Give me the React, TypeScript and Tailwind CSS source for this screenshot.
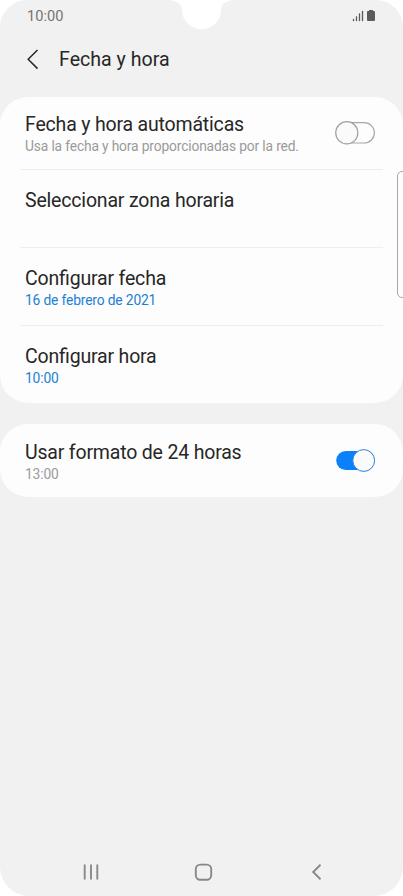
import type { ReactNode } from 'react';

function Toggle({ on = false }: { on?: boolean }) {
  return (
    <svg width="42" height="26" viewBox="0 0 42 26" role="switch" aria-checked={on} className="shrink-0">
      {on ? (
        <>
          <rect x="2.2" y="2.9" width="38" height="19.2" rx="9.6" fill="#0a80fb" />
          <circle cx="29.7" cy="12.5" r="10.9" fill="#fafafa" stroke="#2482d8" strokeWidth="1" />
        </>
      ) : (
        <>
          <rect x="3.2" y="2.6" width="37.2" height="20.4" rx="10.2" fill="#fdfdfd" stroke="#a8a8a8" strokeWidth="1.2" />
          <circle cx="12.8" cy="12.8" r="11.1" fill="#fafafa" stroke="#a0a0a0" strokeWidth="1.2" />
        </>
      )}
    </svg>
  );
}

type RowProps = { title: string; sub?: string; subClass?: string; className: string; control?: ReactNode };

function Row({ title, sub, subClass = '', className, control }: RowProps) {
  return (
    <div className={`flex justify-between pl-[5px] pr-[7px] ${className}`}>
      <div className="whitespace-nowrap">
        <div className="text-[19.500px] leading-[23px] tracking-[-0.180px] text-[#272727] [font-feature-settings:'liga']">{title}</div>
        {sub && <div className={`text-[13.800px] leading-5 tracking-[-0.150px] ${subClass}`}>{sub}</div>}
      </div>
      {control}
    </div>
  );
}

export default function App() {
  return (
    <div className="h-[896px] w-[403px] overflow-hidden bg-white font-[Roboto,sans-serif]">
      <div className="relative flex h-full flex-col overflow-hidden rounded-t-[27px] rounded-b-[29px] bg-[#f1f1f1]">
        <svg className="absolute left-[170px] top-0" width="64" height="30" viewBox="0 0 64 30">
          <path d="M0 0C7 1 11.800 4 11.800 9.500A19.700 19.700 0 0 0 51.200 9.500C51.200 4 56 1 63 0Z" fill="#fff" />
        </svg>

        <header className="flex h-8 items-center justify-between pl-[27px] pr-[27px]">
          <span className="text-[14.600px] leading-4 text-[#737373]">10:00</span>
          <svg width="25" height="14" viewBox="0 0 25 14" fill="#5c5c5c">
            <path d="M2 10h1v2H2zM5 7.500h1V12H5zM8 4.500h1V12H8zM11 2h1v10h-1z" stroke="#5c5c5c" strokeWidth=".3" />
            <path d="M18 1h4v1h1q1 0 1 1v8q0 1-1 1h-6q-1 0-1-1V3q0-1 1-1h1z" />
          </svg>
        </header>

        <div className="flex h-[65px] items-center pb-[10px] pl-[26px]">
          <svg width="14" height="22" viewBox="0 0 14 22" fill="none" stroke="#272727" strokeWidth="1.500">
            <path d="M11.500 1 2.200 10.300l9.300 9.300" />
          </svg>
          <h1 className="ml-[19px] pt-px text-[19.600px] leading-6 text-[#272727]">Fecha y hora</h1>
        </div>

        <section className="h-[306px] rounded-[28px] bg-[#fdfdfd] px-5">
          <Row
            title="Fecha y hora automáticas"
            sub="Usa la fecha y hora proporcionadas por la red."
            subClass="text-[#9a9a9a]"
            className="h-[73px] border-b border-[#eeeeee] pt-4"
            control={<div className="pt-[7px]"><Toggle /></div>}
          />
          <Row title="Seleccionar zona horaria" className="h-[78px] border-b border-[#eeeeee] pt-[19px]" />
          <Row
            title="Configurar fecha"
            sub="16 de febrero de 2021"
            subClass="text-[#1b80d4]"
            className="h-[78px] border-b border-[#eeeeee] pt-[19px]"
          />
          <Row title="Configurar hora" sub="10:00" subClass="text-[#1b80d4]" className="h-[77px] pt-[19px]" />
        </section>

        <section className="mt-[21px] h-[73px] rounded-[28px] bg-[#fdfdfd] px-5">
          <Row
            title="Usar formato de 24 horas"
            sub="13:00"
            subClass="text-[#9a9a9a]"
            className="pt-[17px]"
            control={<div className="pt-[7px]"><Toggle on /></div>}
          />
        </section>

        <div className="absolute left-[397px] top-[171px] h-[127px] w-5 rounded-[5px] border-[1.500px] border-[#a8a8a8] bg-[#fdfdfd]" />

        <nav className="mt-auto flex h-12 items-center pl-[82px]">
          <svg width="240" height="20" viewBox="0 0 240 20" fill="none" stroke="#888" strokeWidth="1.900">
            <path d="M2.700 2.500v15M9 2.500v15M15.300 2.500v15" />
            <rect x="113.800" y="2.600" width="15.400" height="15.200" rx="4.500" />
            <path d="M238.500 2.800 231.200 10l7.300 7.200" />
          </svg>
        </nav>
      </div>
    </div>
  );
}
